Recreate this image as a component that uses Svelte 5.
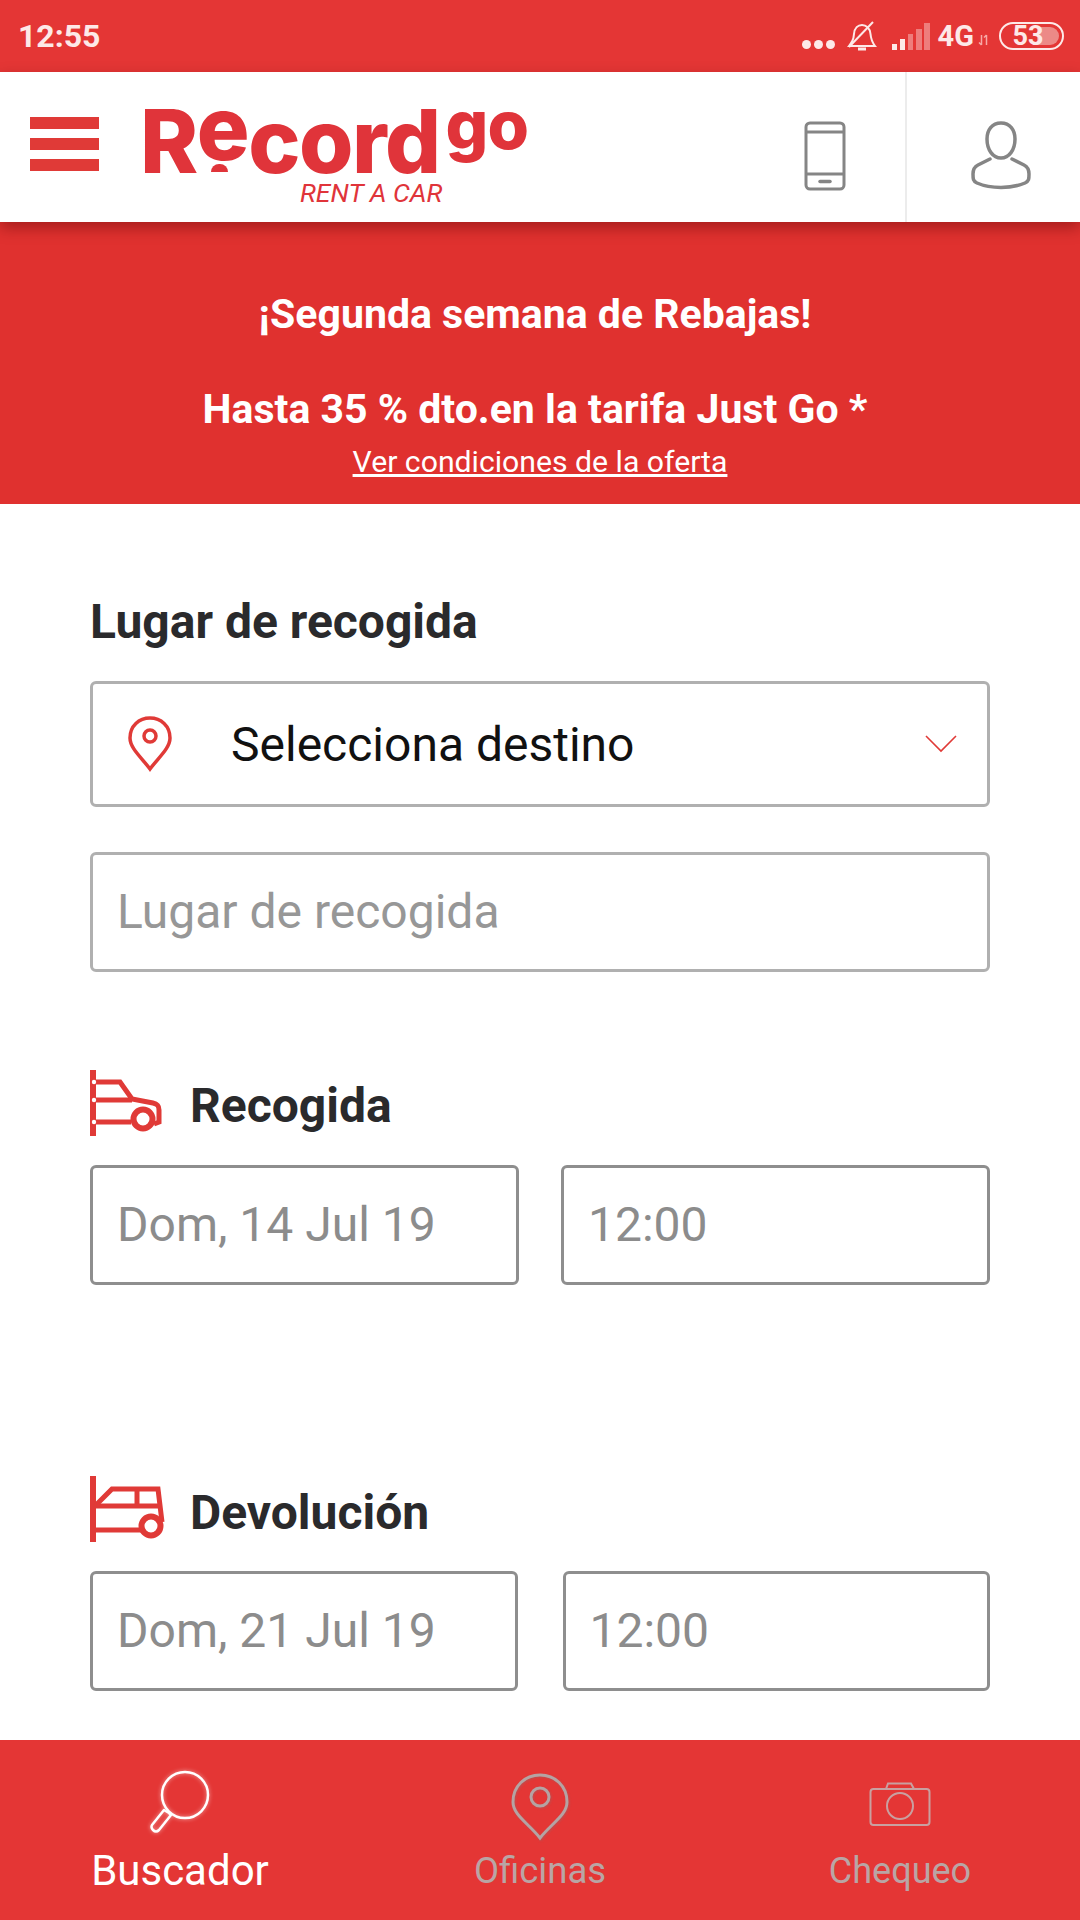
<script lang="ts">
	const sections = [
		{ title: 'Recogida', date: 'Dom, 14 Jul 19', time: '12:00', kind: 'pickup' },
		{ title: 'Devolución', date: 'Dom, 21 Jul 19', time: '12:00', kind: 'dropoff' }
	];
	const bars = [
		{ h: 6, o: 1 },
		{ h: 11, o: 1 },
		{ h: 16, o: 0.4 },
		{ h: 21, o: 0.4 },
		{ h: 27, o: 0.4 }
	];
</script>

<div class="page">
	<div class="status">
		<span class="time">12:55</span>
		<div class="status__right">
			<span class="dots"><i></i><i></i><i></i></span>
			<svg class="bell" width="32" height="32" viewBox="0 0 32 32" fill="none" stroke="#fde9e8" stroke-width="2">
				<path d="M3 26 H29 C26 22 25 20 24.500 14 C24 8 20 5 16 5 C12 5 8.500 8 8 14 C7.500 20 6 22 3 26 Z" />
				<path d="M12 29 H20" stroke-width="3" />
				<path d="M3 27 L27 2" />
			</svg>
			<span class="signal">
				{#each bars as b}
					<i style="height: {b.h}px; opacity: {b.o}"></i>
				{/each}
			</span>
			<span class="net">4G</span>
			<svg class="arrows" width="12" height="14" viewBox="0 0 12 14" fill="none" stroke="#f7a9a6" stroke-width="1.500">
				<path d="M3.500 2 V12 M1 9.500 L3.500 12 M8.500 12 V2 M6 4.500 L8.500 2" />
			</svg>
			<span class="battery"><span class="battery__fill"></span><span class="battery__num">53</span></span>
		</div>
	</div>

	<header class="topbar">
		<div class="burger"><i></i><i></i><i></i></div>
		<div class="logo">
			<div class="logo__word">R<span class="logo__e">e<i class="logo__dot"></i></span>cord<span class="logo__go">go</span></div>
			<div class="logo__sub">RENT A CAR</div>
		</div>
		<div class="topbar__action topbar__action--phone">
			<svg width="42" height="70" viewBox="0 0 42 70" fill="none" stroke="#858585" stroke-width="3">
				<rect x="2" y="2" width="38" height="66" rx="4" />
				<path d="M2 11 H40 M2 53 H40" />
				<path d="M16 60.500 H26" stroke-width="3.500" stroke-linecap="round" />
			</svg>
		</div>
		<div class="topbar__action topbar__action--user">
			<svg width="60" height="70" viewBox="0 0 60 70" fill="none" stroke="#858585" stroke-width="3.500" stroke-linecap="round">
				<path d="M30 2 C21 2 16 9 16 18 C16 29 22 37 30 37 C38 37 44 29 44 18 C44 9 39 2 30 2 Z" />
				<path d="M19 38 L7 44 C3 46 2 49 2 53 C2 58 2 60 6 62 C20 68 40 68 54 62 C58 60 58 58 58 53 C58 49 57 46 53 44 L41 38" />
			</svg>
		</div>
	</header>

	<section class="promo">
		<p class="promo__line">¡Segunda semana de Rebajas!</p>
		<p class="promo__line promo__line--second">Hasta 35 % dto.en la tarifa Just Go *</p>
		<a class="promo__link" href="#oferta">Ver condiciones de la oferta</a>
	</section>

	<main class="form">
		<h2 class="label">Lugar de recogida</h2>
		<div class="select">
			<svg class="select__pin" width="46" height="56" viewBox="0 0 46 56" fill="none" stroke="#e03a37" stroke-width="3.500">
				<path d="M23 53 C14 41 3 32 3 22 C3 10 12 2 23 2 C34 2 43 10 43 22 C43 32 32 41 23 53 Z" />
				<circle cx="23" cy="20" r="6" />
			</svg>
			<span class="select__text">Selecciona destino</span>
			<svg class="select__chev" width="32" height="18" viewBox="0 0 32 18" fill="none" stroke="#e03a37" stroke-width="1.600">
				<path d="M1 1 L16 16 L31 1" />
			</svg>
		</div>
		<div class="field field--light">Lugar de recogida</div>

		{#each sections as s}
			<div class="section section--{s.kind}">
				<div class="section__head">
					{#if s.kind === 'pickup'}
						<svg width="72" height="66" viewBox="0 0 72 66" fill="none" stroke="#e03a37" stroke-width="5">
							<path d="M3 0 V66" stroke-width="6" />
							<path d="M6 12 H30 L42 29 L63 33 C68 34 69 36 69 40 V52 L64 54" />
							<path d="M6 30 H42" />
							<path d="M6 52 H41" />
							<circle cx="53" cy="49" r="9.500" stroke-width="6" />
							<g fill="#fff" stroke="none">
								<circle cx="4" cy="12" r="2.200" />
								<circle cx="4" cy="30" r="2.200" />
								<circle cx="4" cy="52" r="2.200" />
							</g>
						</svg>
					{:else}
						<svg width="76" height="66" viewBox="0 0 76 66" fill="none" stroke="#e03a37" stroke-width="5">
							<path d="M3 0 V66" stroke-width="6" />
							<path d="M5 30 L22 13 H68 L72 46" />
							<path d="M5 30 H71" />
							<path d="M47 13 V30" />
							<path d="M5 54 H52" />
							<circle cx="61" cy="50" r="9.500" stroke-width="6" />
						</svg>
					{/if}
					<h2 class="label label--inline">{s.title}</h2>
				</div>
				<div class="row">
					<div class="field">{s.date}</div>
					<div class="field">{s.time}</div>
				</div>
			</div>
		{/each}
	</main>

	<nav class="tabs">
		<div class="tab tab--active">
			<span class="tab__icon">
				<svg class="glow" width="62" height="64" viewBox="0 0 62 64" fill="none" stroke="#fff" stroke-width="2.500">
					<circle cx="36" cy="25" r="23" />
					<path d="M20 43 L22 45 L10 60 C8 62 6 62 4 60 C2 58 2 57 3 55 L15 40 Z" stroke-linejoin="round" />
				</svg>
			</span>
			<span class="tab__label">Buscador</span>
		</div>
		<div class="tab">
			<span class="tab__icon">
				<svg class="glow glow--pin" width="60" height="68" viewBox="0 0 60 68" fill="none" stroke="#b5a3a3" stroke-width="3">
					<path d="M30 65 C18 50 3 42 3 29 C3 13 15 2 30 2 C45 2 57 13 57 29 C57 42 42 50 30 65 Z" />
					<circle cx="30" cy="24" r="9" />
				</svg>
			</span>
			<span class="tab__label">Oficinas</span>
		</div>
		<div class="tab">
			<span class="tab__icon">
				<svg class="camera" width="62" height="44" viewBox="0 0 62 44" fill="none" stroke="#c9a0a0" stroke-width="2">
					<rect x="1.500" y="7" width="59" height="36" rx="3" />
					<path d="M17 7 L19 1.500 H42 L45 7" />
					<circle cx="31" cy="24" r="13" />
				</svg>
			</span>
			<span class="tab__label tab__label--small">Chequeo</span>
		</div>
	</nav>
</div>

<style>
	:global(body) {
		margin: 0;
		background: #fff;
		font-family: Roboto, 'Liberation Sans', sans-serif;
	}

	.page {
		width: 1080px;
		height: 1920px;
		display: flex;
		flex-direction: column;
		overflow: hidden;
	}

	.status {
		height: 72px;
		flex: none;
		background: #e43635;
		color: #fde9e8;
		display: flex;
		align-items: center;
		justify-content: space-between;
		padding: 0 16px 0 18px;
		box-sizing: border-box;
	}

	.time {
		font-size: 32px;
		font-weight: 700;
	}

	.status__right {
		display: flex;
		align-items: center;
	}

	.dots {
		display: flex;
		gap: 3px;
		margin-top: 16px;
		margin-right: 11px;
	}

	.dots i {
		width: 9px;
		height: 9px;
		border-radius: 50%;
		background: #fde9e8;
	}

	.signal {
		display: flex;
		align-items: flex-end;
		gap: 2.500px;
		margin-left: 14px;
		margin-right: 8px;
		height: 28px;
	}

	.signal i {
		width: 5.600px;
		background: #fde9e8;
	}

	.net {
		font-size: 29px;
		font-weight: 700;
	}

	.arrows {
		margin: 8px 9px 0 4px;
	}

	.battery {
		position: relative;
		width: 61px;
		height: 24px;
		border: 2.500px solid #fde9e8;
		border-radius: 15px;
		display: flex;
		align-items: center;
		justify-content: center;
	}

	.battery__fill {
		position: absolute;
		top: 3px;
		bottom: 3px;
		left: 3px;
		right: 3px;
		border-radius: 10px;
		background: linear-gradient(to right, transparent 60%, #ec8a87 60%);
	}

	.battery__num {
		position: relative;
		font-size: 27px;
		font-weight: 700;
		margin-right: 7px;
	}

	.topbar {
		height: 150px;
		flex: none;
		background: #fff;
		display: flex;
		align-items: center;
		position: relative;
		z-index: 1;
		box-shadow: 0 6px 14px rgba(80, 0, 0, 0.4);
	}

	.burger {
		width: 69px;
		margin-left: 30px;
		margin-top: -6px;
		display: flex;
		flex-direction: column;
		gap: 9px;
	}

	.burger i {
		height: 12px;
		background: #e03a37;
	}

	.logo {
		margin-left: 41px;
		width: 400px;
		color: #e0343a;
		margin-top: 8px;
	}

	.logo__word {
		font-family: Inter, Lato, sans-serif;
		font-size: 88px;
		font-weight: 800;
		line-height: 72px;
		padding-top: 10px;
		letter-spacing: -1.500px;
		white-space: nowrap;
	}

	.logo__e {
		position: relative;
		display: inline-block;
		transform: translateY(-13px);
	}

	.logo__dot {
		position: absolute;
		left: 14px;
		bottom: -8px;
		width: 17px;
		height: 8px;
		border-radius: 8px 8px 0 0;
		background: #e0343a;
	}

	.logo__go {
		font-size: 67px;
		letter-spacing: -1px;
		vertical-align: 24px;
		line-height: 0;
		margin-left: 6px;
	}

	.logo__sub {
		font-size: 26.500px;
		font-style: italic;
		line-height: 28px;
		margin-top: 2px;
		margin-left: 160px;
	}

	.topbar__action {
		height: 100%;
		box-sizing: border-box;
		display: flex;
		align-items: center;
		justify-content: center;
		padding-top: 18px;
	}

	.topbar__action--phone {
		width: 174px;
		margin-left: auto;
		padding-left: 12px;
		border-right: 2px solid #ececec;
	}

	.topbar__action--user {
		width: 173px;
		padding-left: 14px;
	}

	.promo {
		height: 282px;
		flex: none;
		box-sizing: border-box;
		background: #e0312f;
		color: #fff;
		text-align: center;
		padding-top: 69px;
	}

	.promo__line {
		margin: 0;
		font-size: 41px;
		font-weight: 700;
		line-height: 46px;
		padding-right: 10px;
	}

	.promo__line--second {
		margin-top: 49px;
	}

	.promo__link {
		display: block;
		color: #fff;
		font-size: 30.200px;
		line-height: 38px;
		margin-top: 11px;
		text-decoration: underline;
	}

	.form {
		flex: 1;
		min-height: 0;
		padding: 92px 90px 0;
	}

	.label {
		margin: 0;
		font-size: 48px;
		font-weight: 700;
		line-height: 52px;
		color: #2a2a2c;
	}

	.select {
		height: 126px;
		margin-top: 33px;
		box-sizing: border-box;
		border: 3px solid #b0b0b0;
		border-radius: 6px;
		display: flex;
		align-items: center;
		padding: 0 30px 0 34px;
	}

	.select__text {
		font-size: 48px;
		color: #111;
		margin-left: 58px;
	}

	.select__chev {
		margin-left: auto;
	}

	.field {
		height: 120px;
		box-sizing: border-box;
		border: 3px solid #8e8e8e;
		border-radius: 6px;
		display: flex;
		align-items: center;
		padding-left: 24px;
		padding-bottom: 2px;
		font-size: 48px;
		color: #8c8c8c;
		flex: 1;
	}

	.field--light {
		border-color: #b0b0b0;
		margin-top: 45px;
		color: #979797;
	}

	.section {
		margin-top: 98px;
	}

	.section--dropoff {
		margin-top: 191px;
	}

	.section--dropoff .row {
		gap: 45px;
	}

	.section__head {
		display: flex;
		align-items: center;
		height: 66px;
		position: relative;
	}

	.label--inline {
		position: absolute;
		left: 100px;
		top: 10px;
	}

	.section--dropoff .label--inline {
		top: 11px;
	}

	.row {
		display: flex;
		gap: 42px;
		margin-top: 29px;
	}

	.tabs {
		height: 180px;
		flex: none;
		background: #e43635;
		display: grid;
		grid-template-columns: 360px 360px 360px;
	}

	.tab {
		display: flex;
		flex-direction: column;
		align-items: center;
		color: #b9a5a5;
		font-size: 36.500px;
		padding-top: 27px;
		box-sizing: border-box;
		height: 100%;
	}

	.tab__icon {
		height: 76px;
		display: flex;
		align-items: center;
		justify-content: center;
	}

	.tab__label {
		margin-top: 6px;
		line-height: 44px;
	}

	.tab__label--small {
		font-size: 36px;
	}

	.glow {
		filter: drop-shadow(0 0 2px rgba(255, 255, 255, 0.55));
		transform: translateY(-3px);
	}

	.glow--pin {
		filter: drop-shadow(1px 1px 1px rgba(120, 120, 120, 0.35));
		transform: translateY(2px);
	}

	.camera {
		transform: translateY(-1px);
	}

	.tab--active {
		color: #fff;
		font-size: 42px;
	}
</style>
